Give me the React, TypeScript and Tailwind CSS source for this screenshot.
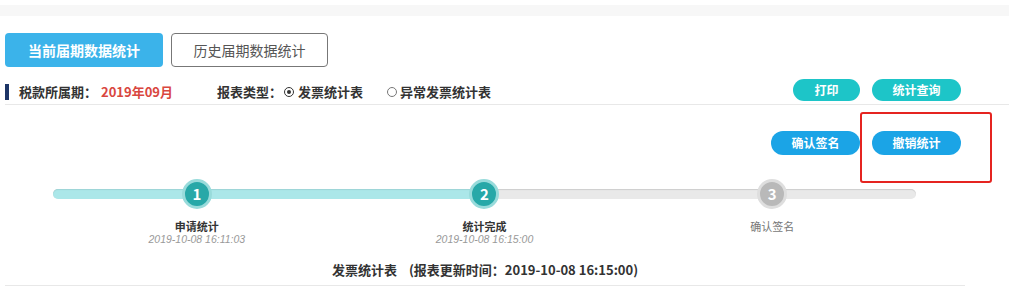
import React from "react";

const steps = [
  { n: 1, title: "申请统计", time: "2019-10-08 16:11:03", done: true },
  { n: 2, title: "统计完成", time: "2019-10-08 16:15:00", done: true },
  { n: 3, title: "确认签名", time: "", done: false },
];

export default function App() {
  return (
    <div className="relative w-[1009px] h-[288px] overflow-hidden bg-white font-['Microsoft_YaHei','Noto_Sans_CJK_SC',sans-serif] text-[#333]">
      {/* top band */}
      <div className="mt-[5px] h-[11px] bg-[#f7f7f7]" />

      {/* tabs */}
      <div className="mt-[17px] flex gap-[8px] pl-[5px]">
        <button className="h-[34px] w-[158px] rounded-[4px] bg-[#3bb3ea] text-[14px] font-bold text-white">
          当前届期数据统计
        </button>
        <button className="h-[34px] w-[157px] rounded-[4px] border border-[#777] bg-white text-[14px] text-[#555]">
          历史届期数据统计
        </button>
      </div>

      {/* filter row */}
      <div className="mt-[13px] ml-[5px] flex h-[24px] items-center border-b border-[#e8e8e8] box-content">
        <div className="h-[16px] w-[4px] bg-[#1d3567]" />
        <span className="ml-[10px] text-[13px] font-bold text-[#333]">税款所属期：</span>
        <span className="ml-[4px] text-[13px] font-bold text-[#d9473f]">2019年09月</span>
        <span className="ml-[44px] text-[13px] font-bold text-[#333]">报表类型：</span>
        <span className="ml-[2px] flex items-center text-[13px] font-bold">
          <span className="flex h-[10px] w-[10px] items-center justify-center rounded-full border border-[#333]">
            <span className="h-[4px] w-[4px] rounded-full bg-[#333]" />
          </span>
          <span className="ml-[4px]">发票统计表</span>
        </span>
        <span className="ml-[24px] flex items-center text-[13px] font-bold">
          <span className="h-[10px] w-[10px] rounded-full border border-[#777]" />
          <span className="ml-[3px]">异常发票统计表</span>
        </span>
        <div className="ml-auto mr-[48px] mb-[4px] flex gap-[12px]">
          <button className="h-[22px] w-[67px] rounded-full bg-[#1dc5c8] text-[12px] font-bold text-white">打印</button>
          <button className="h-[22px] w-[89px] rounded-full bg-[#1dc5c8] text-[12px] font-bold text-white">统计查询</button>
        </div>
      </div>

      {/* action row */}
      <div className="mt-[26px] mr-[48px] flex justify-end gap-[12px]">
        <button className="h-[24px] w-[89px] rounded-full bg-[#1ba4e6] text-[12px] font-bold text-white">确认签名</button>
        <button className="h-[24px] w-[89px] rounded-full bg-[#1ba4e6] text-[12px] font-bold text-white">撤销统计</button>
      </div>

      {/* highlight box */}
      <div className="absolute left-[860px] top-[112px] h-[71px] w-[132px] rounded-[3px] border-2 border-[#e52420]" />

      {/* steps */}
      <div className="relative ml-[53px] mt-[24px] w-[863px]">
        <div className="absolute left-0 right-0 top-[10px] h-[10px] rounded-full bg-[#e9e9e9] shadow-[inset_0_1px_1px_rgba(0,0,0,0.12)]" />
        <div className="absolute left-0 top-[10px] h-[10px] w-[432px] rounded-l-full bg-[#abe7e9] shadow-[inset_0_1px_1px_rgba(0,0,0,0.08)]" />
        <div className="relative grid grid-cols-3">
          {steps.map((s) => (
            <div key={s.n} className="flex flex-col items-center">
              <div
                className={
                  s.done
                    ? "flex h-[30px] w-[30px] items-center justify-center rounded-full border-[3px] border-[#98dbdb] bg-[#27a8a8] text-[15px] font-bold text-white"
                    : "flex h-[30px] w-[30px] items-center justify-center rounded-full border-[3px] border-[#dedede] bg-[#b9b9b9] text-[15px] font-bold text-white"
                }
              >
                {s.n}
              </div>
              <div className={s.done ? "mt-[10px] text-[11px] font-bold leading-[14px] text-[#333]" : "mt-[10px] text-[11px] leading-[14px] text-[#777]"}>
                {s.title}
              </div>
              {s.time && (
                <div className="text-[10.5px] italic leading-[13px] text-[#999] font-['Liberation_Sans',sans-serif]">{s.time}</div>
              )}
            </div>
          ))}
        </div>
      </div>

      {/* table title */}
      <div className="mt-[15px] ml-[5px] w-[960px] border-b border-[#e8e8e8] pb-[6px] text-center text-[13px] font-bold leading-[18px] text-[#333]">
        发票统计表<span className="ml-[12px]">(报表更新时间：2019-10-08 16:15:00)</span>
      </div>
    </div>
  );
}
